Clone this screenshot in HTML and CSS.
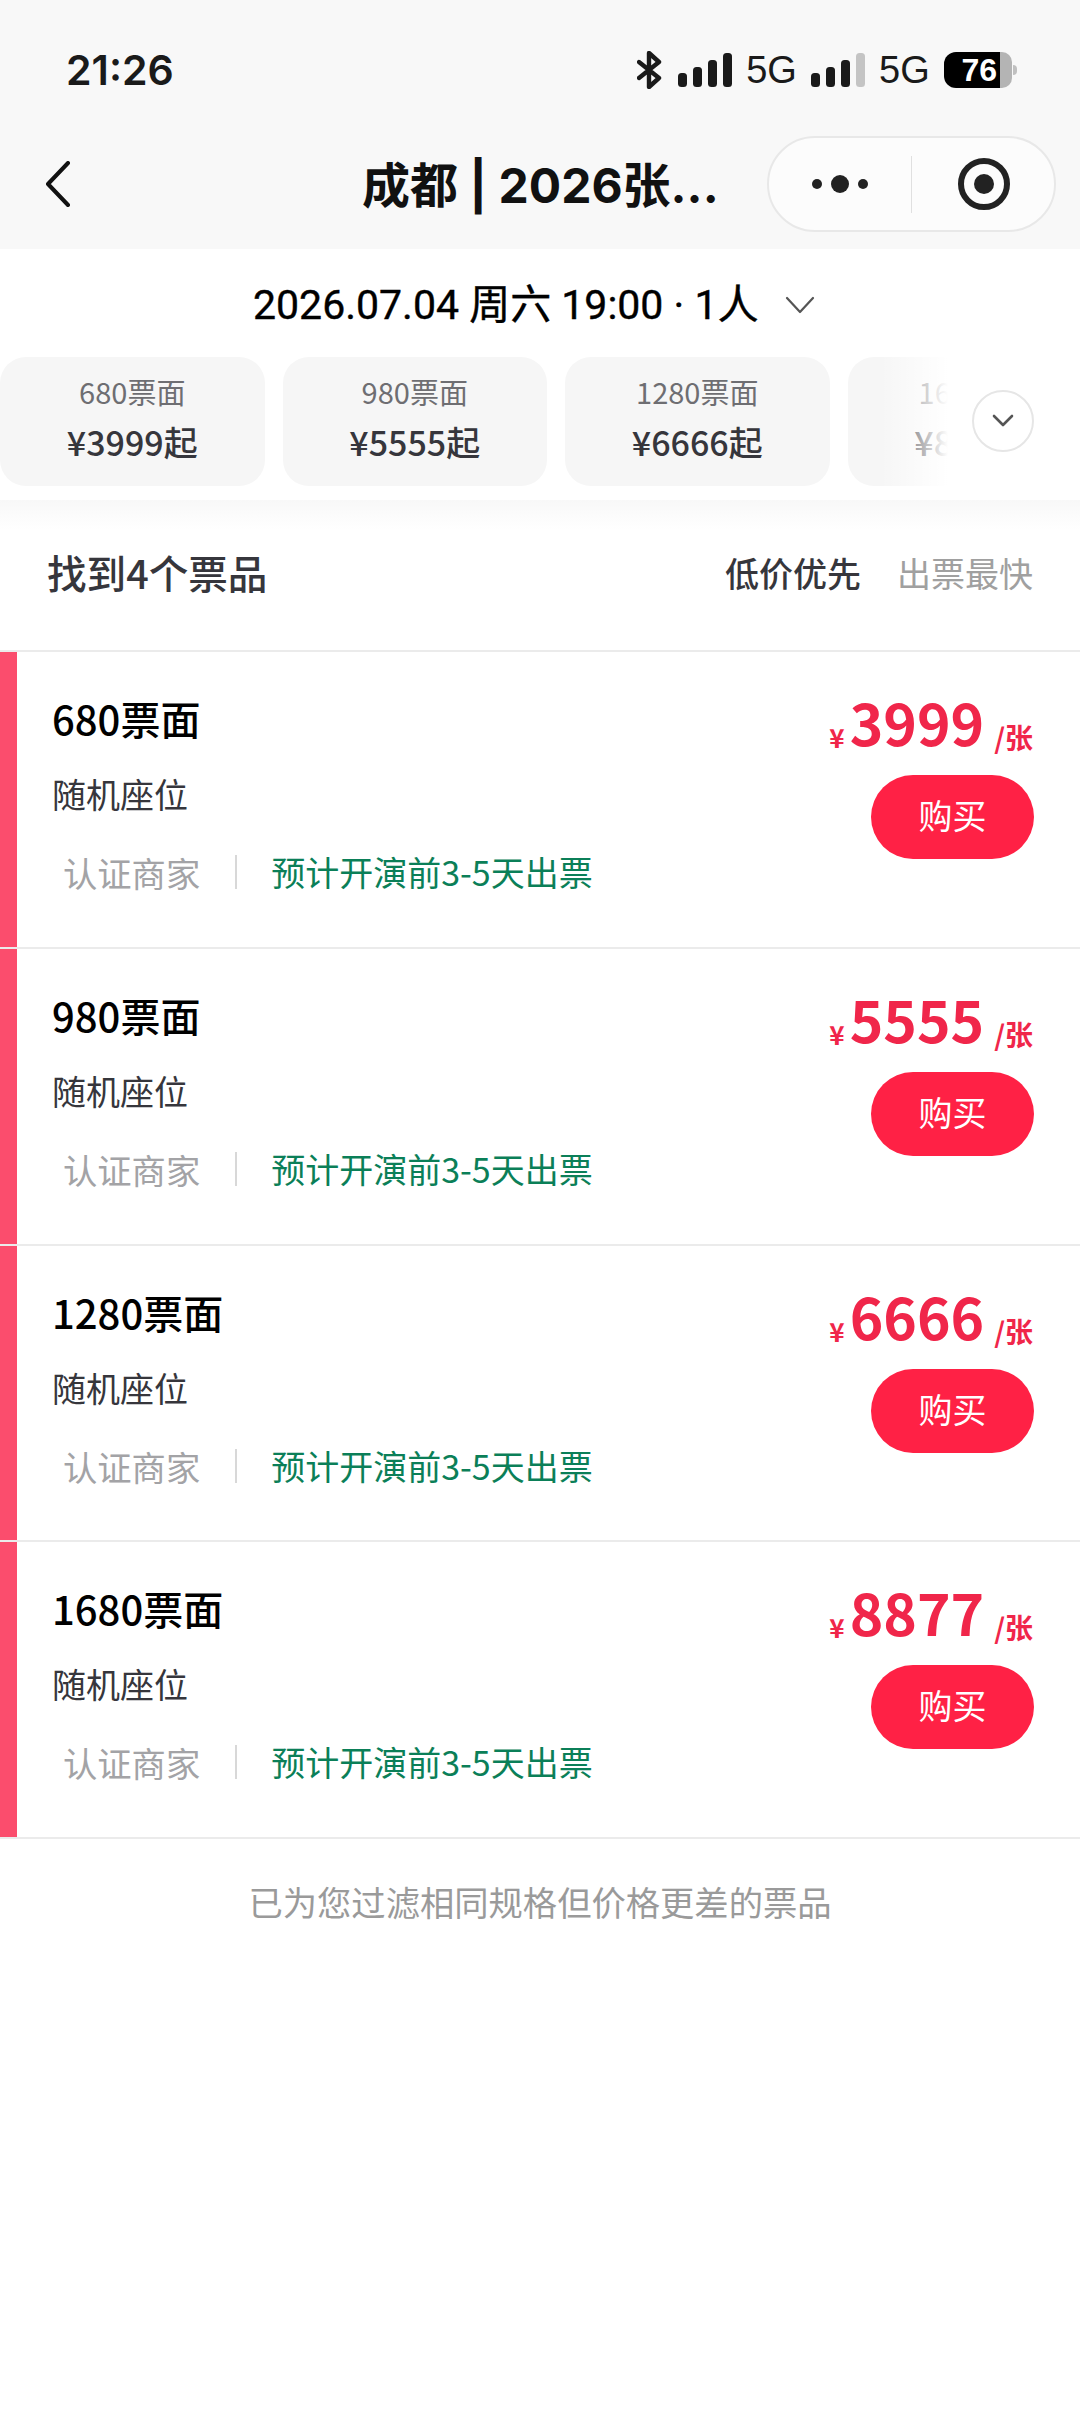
FILE: index.html
```html
<!DOCTYPE html>
<html lang="zh-CN">
<head>
<meta charset="utf-8">
<title>票品列表</title>
<link rel="stylesheet" href="styles.css">
</head>
<body>
<div class="app">
  <div class="topbar">
    <div class="status">
      <span class="time">21:26</span>
      <div class="status-right">
        <svg class="bt" viewBox="0 0 26 38" width="26" height="38"><path d="M2 11 L22 27 L12 36 V2 L22 11 L2 27" fill="none" stroke="#1a1a1a" stroke-width="4.4" stroke-linejoin="round" stroke-linecap="round"/></svg>
        <svg class="signal" viewBox="0 0 54 34" width="54" height="34"><rect x="0" y="20" width="9" height="14" rx="3.5" fill="#1a1a1a"/><rect x="15" y="14" width="9" height="20" rx="3.5" fill="#1a1a1a"/><rect x="30" y="7" width="9" height="27" rx="3.5" fill="#1a1a1a"/><rect x="45" y="0" width="9" height="34" rx="3.5" fill="#1a1a1a"/></svg>
        <span class="net">5G</span>
        <svg class="signal" viewBox="0 0 54 34" width="54" height="34"><rect x="0" y="20" width="9" height="14" rx="3.5" fill="#1a1a1a"/><rect x="15" y="14" width="9" height="20" rx="3.5" fill="#1a1a1a"/><rect x="30" y="7" width="9" height="27" rx="3.5" fill="#1a1a1a"/><rect x="45" y="0" width="9" height="34" rx="3.5" fill="#c4c4c4"/></svg>
        <span class="net">5G</span>
        <div class="battery"><span class="battery-fill">76</span><span class="battery-rest"></span><span class="battery-nub"></span></div>
      </div>
    </div>
    <div class="nav">
      <svg class="back" viewBox="0 0 28 46" width="28" height="46"><path d="M24 2 L4 23 L24 44" fill="none" stroke="#111" stroke-width="4" stroke-linecap="round" stroke-linejoin="round"/></svg>
      <div class="nav-title">成都 | 2026张...</div>
      <div class="capsule">
        <div class="capsule-cell capsule-more">
          <svg viewBox="0 0 56 20" width="56" height="20"><circle cx="5" cy="10" r="5" fill="#222"/><circle cx="28" cy="10" r="9" fill="#222"/><circle cx="51" cy="10" r="5" fill="#222"/></svg>
        </div>
        <div class="capsule-line"></div>
        <div class="capsule-cell capsule-target">
          <svg viewBox="0 0 54 54" width="54" height="54"><circle cx="27" cy="27" r="23" fill="none" stroke="#222" stroke-width="6"/><circle cx="27" cy="27" r="10" fill="#222"/></svg>
        </div>
      </div>
    </div>
  </div>

  <div class="filter">
    <div class="date-row">
      <span class="date">2026.07.04 周六 19:00 · 1人</span>
      <svg class="date-chevron" viewBox="0 0 30 18" width="30" height="18"><path d="M2 2 L15 16 L28 2" fill="none" stroke="#555" stroke-width="2.2" stroke-linecap="round" stroke-linejoin="round"/></svg>
    </div>
    <div class="chips-wrap">
      <div class="chips">
        <div class="chip"><span class="chip-name">680票面</span><span class="chip-price">¥3999起</span></div>
        <div class="chip"><span class="chip-name">980票面</span><span class="chip-price">¥5555起</span></div>
        <div class="chip"><span class="chip-name">1280票面</span><span class="chip-price">¥6666起</span></div>
        <div class="chip"><span class="chip-name">1680票面</span><span class="chip-price">¥8877起</span></div>
      </div>
      <div class="chips-fade"></div>
      <div class="chips-more">
        <svg viewBox="0 0 22 14" width="22" height="14"><path d="M2 2 L11 11 L20 2" fill="none" stroke="#555" stroke-width="2.6" stroke-linecap="round" stroke-linejoin="round"/></svg>
      </div>
    </div>
  </div>
  <div class="filter-shadow"></div>

  <div class="list-head">
    <span class="found">找到4个票品</span>
    <div class="sort">
      <span class="sort-on">低价优先</span>
      <span class="sort-off">出票最快</span>
    </div>
  </div>

  <div class="list">
    <div class="row">
      <div class="bar"></div>
      <div class="row-main">
        <div class="row-left">
          <div class="row-title">680票面</div>
          <div class="row-seat">随机座位</div>
          <div class="row-meta"><span class="seller">认证商家</span><span class="meta-line"></span><span class="eta">预计开演前3-5天出票</span></div>
        </div>
        <div class="row-right">
          <div class="price"><span class="yen">¥</span><span class="amount">3999</span><span class="unit">/张</span></div>
          <div class="buy">购买</div>
        </div>
      </div>
    </div>
    <div class="row">
      <div class="bar"></div>
      <div class="row-main">
        <div class="row-left">
          <div class="row-title">980票面</div>
          <div class="row-seat">随机座位</div>
          <div class="row-meta"><span class="seller">认证商家</span><span class="meta-line"></span><span class="eta">预计开演前3-5天出票</span></div>
        </div>
        <div class="row-right">
          <div class="price"><span class="yen">¥</span><span class="amount">5555</span><span class="unit">/张</span></div>
          <div class="buy">购买</div>
        </div>
      </div>
    </div>
    <div class="row">
      <div class="bar"></div>
      <div class="row-main">
        <div class="row-left">
          <div class="row-title">1280票面</div>
          <div class="row-seat">随机座位</div>
          <div class="row-meta"><span class="seller">认证商家</span><span class="meta-line"></span><span class="eta">预计开演前3-5天出票</span></div>
        </div>
        <div class="row-right">
          <div class="price"><span class="yen">¥</span><span class="amount">6666</span><span class="unit">/张</span></div>
          <div class="buy">购买</div>
        </div>
      </div>
    </div>
    <div class="row">
      <div class="bar"></div>
      <div class="row-main">
        <div class="row-left">
          <div class="row-title">1680票面</div>
          <div class="row-seat">随机座位</div>
          <div class="row-meta"><span class="seller">认证商家</span><span class="meta-line"></span><span class="eta">预计开演前3-5天出票</span></div>
        </div>
        <div class="row-right">
          <div class="price"><span class="yen">¥</span><span class="amount">8877</span><span class="unit">/张</span></div>
          <div class="buy">购买</div>
        </div>
      </div>
    </div>
  </div>

  <div class="foot">已为您过滤相同规格但价格更差的票品</div>
</div>
</body>
</html>
```

FILE: styles.css
```css
* { box-sizing: border-box; }
html, body { margin: 0; padding: 0; background: #fff; }
body { font-family: "Noto Sans CJK SC", "Noto Sans", sans-serif; }
.app { width: 1080px; height: 2412px; overflow: hidden; background: #fff; }

.topbar { background: #f8f8f8; height: 249px; }
.status { height: 136px; display: flex; justify-content: space-between; padding: 50px 63px 0 66px; align-items: flex-start; }
.time { font-family: "Inter", "Roboto", sans-serif; font-size: 41px; line-height: 40px; font-weight: 600; color: #1a1a1a; }
.status-right { display: flex; align-items: center; height: 40px; }
.bt { margin-right: 15.5px; }
.net { font-family: "Liberation Sans", sans-serif; font-size: 38px; line-height: 40px; color: #1a1a1a; margin: 0 14.2px 0 14px; }
.battery { display: flex; align-items: center; height: 36px; }
.battery-fill { width: 56px; height: 36px; background: #000; color: #fff; border-radius: 12px 0 0 12px; font-family: "Liberation Sans", sans-serif; font-weight: 700; font-size: 32px; line-height: 36px; text-align: right; padding-right: 3px; }
.battery-rest { width: 12px; height: 36px; background: #b4b4b4; border-radius: 0 10px 10px 0; }
.battery-nub { width: 4px; height: 10px; margin-left: 1px; background: #c0c0c0; border-radius: 0 5px 5px 0; }

.nav { height: 113px; display: flex; align-items: flex-start; position: relative; padding-left: 44px; }
.back { margin-top: 25px; }
.nav-title { position: absolute; left: 362px; top: 22px; font-family: "Inter", "Noto Sans CJK SC", sans-serif; font-size: 48px; line-height: 56px; font-weight: 700; color: #111; white-space: nowrap; }
.capsule { position: absolute; left: 767px; top: 0; width: 289px; height: 96px; border: 2px solid #e8e8e8; border-radius: 48px; background: #fcfcfc; display: flex; align-items: center; }
.capsule-cell { display: flex; align-items: center; justify-content: center; }
.capsule-more { width: 142px; }
.capsule-line { width: 1px; height: 57px; background: #e0e0e0; }
.capsule-target { flex: 1; padding-left: 2px; }

.filter { background: #fff; height: 251px; display: flex; flex-direction: column; }
.date-row { height: 108px; display: flex; justify-content: flex-start; align-items: center; padding: 3px 0 0 253px; gap: 26px; }
.date { font-family: "Roboto", "Noto Sans CJK SC", sans-serif; font-size: 41px; line-height: 56px; font-weight: 400; color: #000; white-space: nowrap; -webkit-text-stroke: 0.4px #000; }
.chips-wrap { position: relative; overflow: hidden; height: 130px; }
.chips { display: flex; gap: 18px; width: 1200px; }
.chip { flex: 0 0 264.5px; height: 129px; background: #f6f6f6; border-radius: 26px; display: flex; flex-direction: column; align-items: center; padding-top: 17px; }
.chip-name { font-size: 29px; line-height: 34px; color: #6e6e72; }
.chip-price { font-size: 34px; line-height: 40px; font-weight: 500; color: #36363c; margin-top: 14px; }
.chips-fade { position: absolute; left: 880px; top: 0; width: 200px; height: 130px; background: linear-gradient(to right, rgba(255,255,255,0) 0, #fff 34%, #fff 100%); }
.chips-more { position: absolute; left: 972px; top: 33px; width: 62px; height: 62px; border: 2px solid #e6e6e6; border-radius: 50%; background: #fff; display: flex; align-items: center; justify-content: center; }

.filter-shadow { height: 30px; background: linear-gradient(to bottom, #f8f8f8, #fff); }

.list-head { height: 120px; display: flex; justify-content: space-between; align-items: center; padding: 0 47px 36px 47px; }
.found { font-size: 39.6px; line-height: 56px; font-weight: 500; color: #36363c; }
.sort { display: flex; gap: 36px; font-size: 34px; line-height: 50px; padding-top: 2px; }
.sort-on { color: #36363c; font-weight: 500; }
.sort-off { color: #a0a0a0; }

.list { border-top: 2px solid #ebebeb; }
.row { height: 296.75px; display: flex; border-bottom: 2px solid #ebebeb; }
.bar { width: 17px; background: #fb4d6d; }
.row-main { flex: 1; display: flex; justify-content: space-between; padding: 0 46px 0 35px; }
.row-left { padding-top: 41px; }
.row-title { font-size: 40px; line-height: 50px; font-weight: 500; color: #000; }
.row-seat { font-size: 34px; line-height: 50px; margin-top: 26px; color: #36363c; }
.row-meta { display: flex; align-items: center; margin-top: 28px; height: 50px; padding-left: 11px; }
.seller { font-size: 34.3px; line-height: 50px; color: #a3a3a6; }
.meta-line { width: 2px; height: 34px; background: #d8d8d8; margin: 0 34px 0 35px; }
.eta { font-size: 34px; line-height: 50px; color: #0b7f58; }

.row-right { display: flex; flex-direction: column; align-items: flex-end; padding-top: 34px; }
.price { color: #f0264a; height: 73px; line-height: 70px; white-space: nowrap; font-weight: 700; }
.yen { font-size: 26px; margin-right: 5px; vertical-align: -2px; }
.amount { font-size: 57px; }
.unit { font-size: 28px; margin-left: 10px; margin-right: 1px; vertical-align: -3px; }
.buy { width: 163px; height: 84px; margin-top: 16px; border-radius: 42px; background: #ff2145; color: #fff; font-size: 34px; line-height: 79px; text-align: center; }

.foot { text-align: center; font-size: 34.3px; line-height: 50px; color: #9a9a9a; margin-top: 37px; }
```
